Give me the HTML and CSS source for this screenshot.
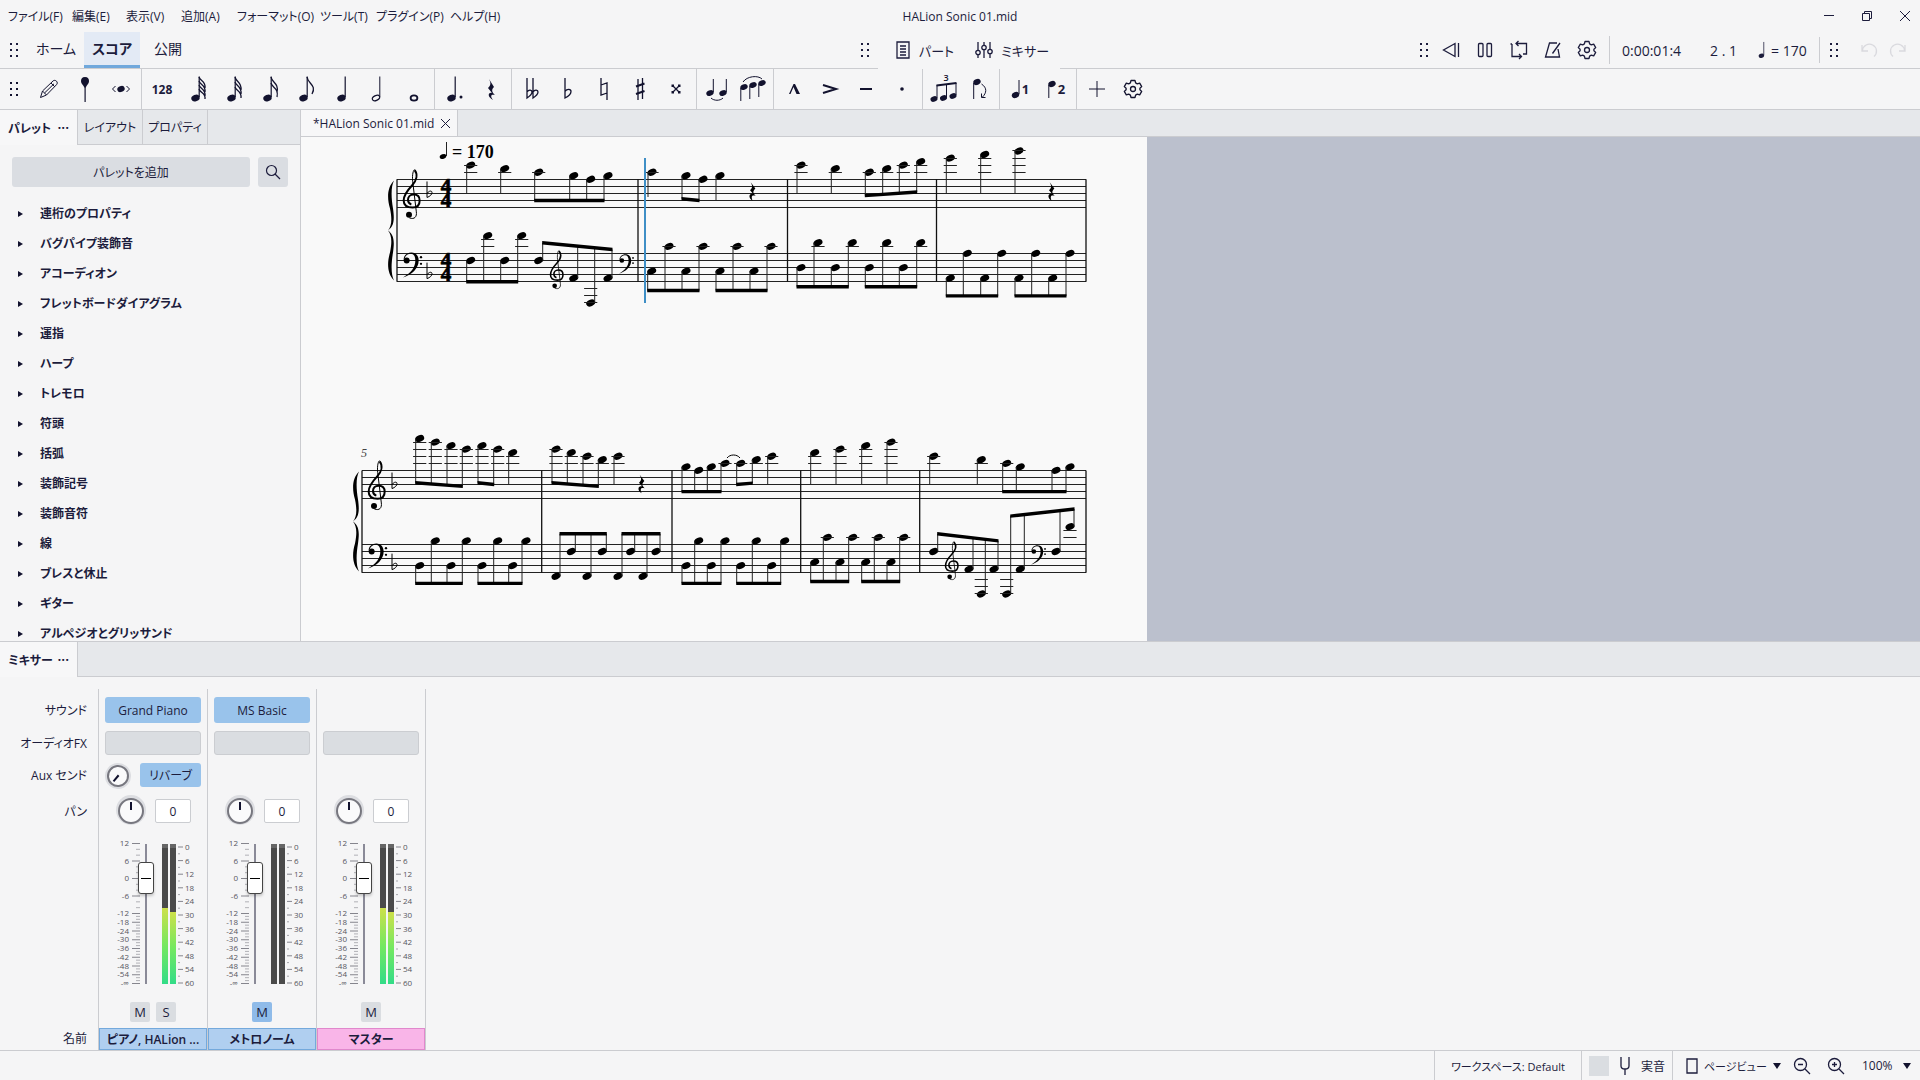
FILE: index.html
```html
<!DOCTYPE html>
<html lang="ja">
<head>
    <meta charset="UTF-8">
    <meta name="viewport" content="width=device-width, initial-scale=1.0">
    <title>HALion Sonic 01.mid</title>
    <link rel="stylesheet" href="styles.css">
</head>
<body>

    <!-- Shared icons -->
    <svg class="defs" width="0" height="0">
        <symbol id="grip" viewBox="0 0 10 16">
            <g fill="currentColor"><rect x="1" y="1" width="2" height="2"/><rect x="7" y="1" width="2" height="2"/><rect x="1" y="7" width="2" height="2"/><rect x="7" y="7" width="2" height="2"/><rect x="1" y="13" width="2" height="2"/><rect x="7" y="13" width="2" height="2"/></g>
        </symbol>
        <symbol id="gear" viewBox="0 0 20 20">
            <path d="M8 1.5h4l.6 2.4 1.7 1 2.4-.7 2 3.4-1.8 1.7v1.4l1.8 1.7-2 3.4-2.4-.7-1.7 1-.6 2.4H8l-.6-2.4-1.7-1-2.4.7-2-3.4 1.8-1.7V9.3L1.3 7.6l2-3.4 2.4.7 1.7-1z" fill="none" stroke="currentColor" stroke-width="1.3" stroke-linejoin="round"/>
            <circle cx="10" cy="10" r="2.5" fill="none" stroke="currentColor" stroke-width="1.3"/>
        </symbol>
        <symbol id="quarter" viewBox="0 0 24 28">
            <ellipse cx="9.5" cy="23" rx="4.3" ry="3.3" transform="rotate(-22 9.5 23)" fill="currentColor"/>
            <path d="M13.2 22V1.5" stroke="currentColor" stroke-width="1.2"/>
        </symbol>
    </svg>

    <header class="titlebar">
        <nav class="menu">
            <a href="#">ファイル(F)</a>
            <a href="#">編集(E)</a>
            <a href="#">表示(V)</a>
            <a href="#">追加(A)</a>
            <a href="#">フォーマット(O)</a>
            <a href="#">ツール(T)</a>
            <a href="#">プラグイン(P)</a>
            <a href="#">ヘルプ(H)</a>
        </nav>
        <div class="title">HALion Sonic 01.mid</div>
        <div class="window-buttons">
            <button aria-label="最小化"><svg width="12" height="12"><path d="M1 5.5h10"/></svg></button>
            <button aria-label="元に戻す"><svg width="12" height="12"><path d="M1.500 3.500h7v7h-7zM3.500 3.500v-2h7v7h-2"/></svg></button>
            <button aria-label="閉じる"><svg width="12" height="12"><path d="M1 1l10 10M11 1L1 11"/></svg></button>
        </div>
    </header>

    <div class="main-toolbar">
        <div class="tabs-area">
            <svg class="grip" width="10" height="16"><use href="#grip"/></svg>
            <a class="page-tab" href="#">ホーム</a>
            <a class="page-tab active" href="#">スコア</a>
            <a class="page-tab" href="#">公開</a>
        </div>
        <div class="view-area">
            <svg class="grip" width="10" height="16"><use href="#grip"/></svg>
            <button class="text-button parts">
                <svg width="14" height="18"><path d="M1 1h12v16H1zM4 5h6M4 8h6M4 11h6M4 14h6"/></svg>パート
            </button>
            <button class="text-button">
                <svg width="18" height="18"><path d="M3 1v8M3 14v3M9 1v3M9 9v8M15 1v7M15 13v4"/><circle cx="3" cy="11.500" r="2.200"/><circle cx="9" cy="6.500" r="2.200"/><circle cx="15" cy="10.500" r="2.200"/></svg>ミキサー
            </button>
        </div>
        <div class="play-area">
            <svg class="grip" width="10" height="16"><use href="#grip"/></svg>
            <div class="play-buttons">
                <button aria-label="巻き戻し"><svg width="20" height="20"><path d="M14 3.500v13L2.500 10zM17.500 3v14"/></svg></button>
                <button aria-label="一時停止"><svg width="20" height="20"><rect x="3.500" y="3.500" width="4.500" height="13" rx="1"/><rect x="12" y="3.500" width="4.500" height="13" rx="1"/></svg></button>
                <button aria-label="ループ"><svg width="20" height="20"><path d="M7 3.500h10.500V14H14M9.500 1L7 3.500 9.500 6M3 4v12.500h9.500M10 14l2.500 2.500L10 19M1.500 4H3"/></svg></button>
                <button aria-label="メトロノーム"><svg width="20" height="20"><path d="M14 3H6.500L2.500 17h14L15 9M9.500 13.500L17 3"/></svg></button>
                <button aria-label="再生設定"><svg width="20" height="20"><use href="#gear"/></svg></button>
            </div>
            <div class="position">
                <span class="time">0:00:01:4</span>
                <span class="beat">2 . 1</span>
                <span class="tempo"><svg width="14" height="18" viewBox="2 0 20 28"><use href="#quarter" width="24" height="28"/></svg>= 170</span>
            </div>
        </div>
        <div class="undo-area">
            <svg class="grip" width="10" height="16"><use href="#grip"/></svg>
            <button disabled aria-label="元に戻す"><svg width="20" height="20"><path d="M3 5v6h6M3.500 10.500a7 7 0 1 1 11.500 6"/></svg></button>
            <button disabled aria-label="やり直す"><svg width="20" height="20"><path d="M17 5v6h-6M16.500 10.500a7 7 0 1 0-11.500 6"/></svg></button>
        </div>
    </div>

    <div class="note-toolbar">
        <div class="group first">
            <svg class="grip" width="10" height="16"><use href="#grip"/></svg>
            <button aria-label="音符入力"><svg class="line" width="20" height="20"><path d="M1.500 18.500l2-6.500L14 2c1-1 2.500-.8 3.500.2s1 2.500 0 3.500L7.500 16zM12 4l3.800 3.800M3.500 12l4 4M5.500 14L15 4.800"/></svg></button>
            <button aria-label="調律"><svg width="12" height="26"><path d="M6 1c3 0 4 2 4 4 0 3-2.500 4-3.300 7v14H5.500V12C4.500 9 2 8 2 5c0-2 1-4 4-4z"/></svg></button>
            <button aria-label="ステップ入力"><svg width="20" height="14"><ellipse cx="10" cy="7" rx="3.800" ry="2.900" transform="rotate(-20 10 7)"/><path class="line" d="M4.500 4L1.500 7l3 3M15.500 4l3 3-3 3"/></svg></button>
        </div>
        <div class="group">
            <button class="bold">128</button>
            <button aria-label="64分音符"><svg width="24" height="28"><use href="#quarter"/><path class="flag" d="M13 2c1 4 7 4 6 11M13 6c1 4 7 4 6 11M13 10c1 4 7 4 6 11M13 14c1 4 7 4 6 10"/></svg></button>
            <button aria-label="32分音符"><svg width="24" height="28"><use href="#quarter"/><path class="flag" d="M13 2c1 5 7 5 6 13M13 7c1 4 7 4 6 12M13 12c1 4 7 4 6 11"/></svg></button>
            <button aria-label="16分音符"><svg width="24" height="28"><use href="#quarter"/><path class="flag" d="M13 2c1 6 8 6 6 15M13 8c1 5 8 5 6 14"/></svg></button>
            <button aria-label="8分音符"><svg width="24" height="28"><use href="#quarter"/><path class="flag" d="M13 2c1 7 10 8 5 17"/></svg></button>
            <button aria-label="4分音符"><svg width="24" height="28"><use href="#quarter" x="2"/></svg></button>
            <button aria-label="2分音符"><svg width="24" height="28"><ellipse class="hollow" cx="10" cy="23" rx="3.900" ry="2.400" transform="rotate(-28 10 23)"/><path class="line" d="M13.800 22V1.500"/></svg></button>
            <button aria-label="全音符"><svg width="24" height="28"><ellipse class="hollow whole" cx="12" cy="23" rx="3.400" ry="2.600"/></svg></button>
        </div>
        <div class="group">
            <button aria-label="付点"><svg width="24" height="28"><use href="#quarter" x="-1"/><circle cx="18" cy="22" r="1.500"/></svg></button>
            <button aria-label="休符"><svg width="24" height="28"><path d="M10 4l5 8c-3 3-2 5 1 8-4-1-5 1-2 5-6-3-5-8-1-7l-4-5c3-3 3-5 1-9z"/></svg></button>
        </div>
        <div class="group">
            <button aria-label="ダブルフラット"><svg class="acc" width="24" height="28"><path d="M7 3v20c3-2 5-4 5-6s-3-3-5 0M13 3v20c3-2 5-4 5-6s-3-3-5 0"/></svg></button>
            <button aria-label="フラット"><svg class="acc" width="24" height="28"><path d="M9 3v20c4-2 6-4 6-6.500s-4-3-6 0"/></svg></button>
            <button aria-label="ナチュラル"><svg class="acc" width="24" height="28"><path d="M9 3v17l6-2M15 25V8l-6 2"/></svg></button>
            <button aria-label="シャープ"><svg class="acc" width="24" height="28"><path d="M10 4v21M14.500 3v21"/><path class="thick" d="M8 11.500l8.500-3M8 19l8.500-3"/></svg></button>
            <button aria-label="ダブルシャープ"><svg width="24" height="28"><path class="acc" d="M8.500 10.500l7 7M15.500 10.500l-7 7"/><path d="M7.500 9.500h2.500v2.500H7.500zM14 9.500h2.500v2.500H14zM7.500 16h2.500v2.500H7.500zM14 16h2.500v2.500H14z"/></svg></button>
        </div>
        <div class="group">
            <button aria-label="タイ"><svg width="26" height="28"><ellipse cx="6" cy="18" rx="3.800" ry="2.800" transform="rotate(-22 6 18)"/><ellipse cx="19" cy="18" rx="3.800" ry="2.800" transform="rotate(-22 19 18)"/><path class="line" d="M9.300 17V4M22.300 17V4M7 23c3 3 9 3 12 0"/></svg></button>
            <button aria-label="スラー"><svg width="28" height="28"><ellipse cx="5" cy="12" rx="3.800" ry="2.800" transform="rotate(-22 5 12)"/><ellipse cx="14" cy="10" rx="3.800" ry="2.800" transform="rotate(-22 14 10)"/><ellipse cx="23" cy="8" rx="3.800" ry="2.800" transform="rotate(-22 23 8)"/><path class="line" d="M1.800 13v13M10.800 11v13M19.800 9v13M4 7c4-6 15-7 19-3"/></svg></button>
        </div>
        <div class="group">
            <button aria-label="マルカート"><svg width="24" height="28"><path d="M7 19l4.500-10H13l5 10h-3.500L11.500 12 8.500 19z"/></svg></button>
            <button aria-label="アクセント"><svg width="24" height="28"><path class="thick" d="M5 10l13 4-13 4"/></svg></button>
            <button aria-label="テヌート"><svg width="24" height="28"><path class="thick" d="M6 14h12"/></svg></button>
            <button aria-label="スタッカート"><svg width="24" height="28"><circle cx="12" cy="14" r="1.800"/></svg></button>
        </div>
        <div class="group">
            <button aria-label="連符"><svg width="28" height="30"><ellipse cx="5" cy="25" rx="3.600" ry="2.700" transform="rotate(-20 5 25)"/><ellipse cx="14.500" cy="24" rx="3.600" ry="2.700" transform="rotate(-20 14.500 24)"/><ellipse cx="24" cy="22" rx="3.600" ry="2.700" transform="rotate(-20 24 22)"/><path class="line" d="M8 24V11M17.500 23V10M27 21V9"/><path class="thick" d="M7.500 11.500l20-2.500"/><text x="17" y="7" class="tuplet">3</text></svg></button>
            <button aria-label="反転"><svg width="24" height="28"><ellipse cx="10" cy="7" rx="3.800" ry="2.900" transform="rotate(-22 10 7)"/><path class="line" d="M6.700 8v16M14.500 9c6 4 5 9 1 13M14.500 18.500V22.500h4"/></svg></button>
        </div>
        <div class="group">
            <button class="bold voice"><svg width="10" height="20" viewBox="0 0 10 20"><ellipse cx="4.500" cy="16" rx="3.800" ry="2.900" transform="rotate(-22 4.500 16)"/><path class="line" d="M8 15V1"/></svg>1</button>
            <button class="bold voice"><svg width="10" height="20" viewBox="0 0 10 20"><ellipse cx="5" cy="5" rx="3.800" ry="2.900" transform="rotate(-22 5 5)"/><path class="line" d="M1.800 6v13"/></svg>2</button>
        </div>
        <div class="group last">
            <button aria-label="追加"><svg class="line" width="18" height="18"><path d="M9 1v16M1 9h16"/></svg></button>
            <button aria-label="カスタマイズ"><svg width="20" height="20"><use href="#gear"/></svg></button>
        </div>
    </div>

    <div class="workspace">
        <aside class="sidebar">
            <div class="panel-tabs">
                <button class="active">パレット <span class="dots">···</span></button>
                <button>レイアウト</button>
                <button>プロパティ</button>
            </div>
            <div class="palette-search">
                <button class="add">パレットを追加</button>
                <button class="find" aria-label="検索"><svg width="16" height="16"><circle cx="6.500" cy="6.500" r="5"/><path d="M10 10l5 5"/></svg></button>
            </div>
            <ul class="palettes">
                <li>連桁のプロパティ</li>
                <li>バグパイプ装飾音</li>
                <li>アコーディオン</li>
                <li>フレットボードダイアグラム</li>
                <li>運指</li>
                <li>ハープ</li>
                <li>トレモロ</li>
                <li>符頭</li>
                <li>括弧</li>
                <li>装飾記号</li>
                <li>装飾音符</li>
                <li>線</li>
                <li>ブレスと休止</li>
                <li>ギター</li>
                <li>アルペジオとグリッサンド</li>
            </ul>
        </aside>
        <main class="document">
            <div class="doc-tabs">
                <div class="doc-tab">*HALion Sonic 01.mid <button aria-label="閉じる"><svg width="11" height="11"><path d="M1 1l9 9M10 1l-9 9"/></svg></button></div>
            </div>
            <div class="canvas">
                <div class="sheet"><svg id="score" width="846" height="504" viewBox="301 137 846 504"></svg></div>
            </div>
        </main>
    </div>

    <section class="mixer">
        <div class="panel-tabs">
            <button class="active">ミキサー <span class="dots">···</span></button>
        </div>
        <div class="strips">
            <div class="strip labels">
                <div class="sound">サウンド</div>
                <div class="fx">オーディオFX</div>
                <div class="aux">Aux センド</div>
                <div class="pan">パン</div>
                <div class="fader"></div>
                <div class="mute"></div>
                <div class="name">名前</div>
            </div>
            <div class="strip">
                <div class="sound"><button class="slot blue">Grand Piano</button></div>
                <div class="fx"><button class="slot empty" aria-label="FX"></button></div>
                <div class="aux"><input type="range" class="knob small" aria-label="センド量"><button class="slot blue">リバーブ</button></div>
                <div class="pan"><input type="range" class="knob" aria-label="パン"><input type="text" value="0" aria-label="パンの値"></div>
                <div class="fader" data-left="76" data-right="72"></div>
                <div class="mute"><button>M</button><button>S</button></div>
                <div class="name blue-name">ピアノ, HALion ...</div>
            </div>
            <div class="strip">
                <div class="sound"><button class="slot blue">MS Basic</button></div>
                <div class="fx"><button class="slot empty" aria-label="FX"></button></div>
                <div class="aux"></div>
                <div class="pan"><input type="range" class="knob" aria-label="パン"><input type="text" value="0" aria-label="パンの値"></div>
                <div class="fader" data-left="0" data-right="0"></div>
                <div class="mute"><button class="on">M</button></div>
                <div class="name blue-name">メトロノーム</div>
            </div>
            <div class="strip">
                <div class="sound"></div>
                <div class="fx"><button class="slot empty" aria-label="FX"></button></div>
                <div class="aux"></div>
                <div class="pan"><input type="range" class="knob" aria-label="パン"><input type="text" value="0" aria-label="パンの値"></div>
                <div class="fader" data-left="76" data-right="72"></div>
                <div class="mute"><button>M</button></div>
                <div class="name pink-name">マスター</div>
            </div>
        </div>
    </section>

    <footer class="statusbar">
        <button class="workspace-name">ワークスペース: Default</button>
        <button class="concert"><span class="box"></span><svg width="12" height="20"><path d="M2 1v9c0 4 8 4 8 0V1M6 13v6"/></svg>実音</button>
        <div class="view">
            <button class="page-view"><svg width="12" height="16"><path d="M1 1h10v14H1z"/></svg>ページビュー<i class="down"></i></button>
            <button class="zoom" aria-label="縮小"><svg width="18" height="18"><circle cx="7.500" cy="7.500" r="6"/><path d="M12 12l5 5M5 7.500h5"/></svg></button>
            <button class="zoom" aria-label="拡大"><svg width="18" height="18"><circle cx="7.500" cy="7.500" r="6"/><path d="M12 12l5 5M5 7.500h5M7.500 5v5"/></svg></button>
            <button class="percent">100%<i class="down"></i></button>
        </div>
    </footer>

    <script src="score.js"></script>
</body>
</html>
```

FILE: styles.css
```css
* {
    box-sizing: border-box;
}

body {
    margin: 0;
    height: 100vh;
    display: flex;
    flex-direction: column;
    overflow: hidden;
    background-color: #f5f5f6;
    color: #1c1c3c;
    font-family: "Open Sans", "Noto Sans CJK JP", sans-serif;
    font-size: 12px;
    font-feature-settings: "palt";
}

button, input {
    font: inherit;
    font-feature-settings: inherit;
    color: inherit;
    margin: 0;
    padding: 0;
    border: 0;
    background: none;
}

button {
    display: flex;
    align-items: center;
    justify-content: center;
    white-space: nowrap;
}

a {
    color: inherit;
    text-decoration: none;
}

svg {
    flex: none;
    display: block;
}

.defs {
    position: absolute;
}

/* Title bar */
.titlebar {
    display: grid;
    grid-template-columns: 1fr auto 1fr;
    align-items: center;
    height: 32px;
}

.menu {
    display: grid;
    grid-template-columns: 64px 54px 55px 56px 83px 56px 74px auto;
    padding-left: 8px;
    white-space: nowrap;
}

.window-buttons {
    display: flex;
    justify-content: flex-end;
    gap: 26px;
    padding-right: 9px;
}

.window-buttons path, .doc-tab path {
    fill: none;
    stroke: #1c1c3c;
}

/* Tabs, parts, playback, undo */
.main-toolbar {
    display: flex;
    height: 37px;
    border-bottom: 1px solid #cbccd0;
    font-size: 14px;
}

.main-toolbar > div {
    display: flex;
    align-items: center;
    height: 36px;
}

.tabs-area {
    padding-left: 9px;
    flex: 1 1 74px;
}

.page-tab {
    width: 56px;
    height: 36px;
    line-height: 34px;
    text-align: center;
    white-space: nowrap;
}

.grip + .page-tab {
    margin-left: 9px;
}

.page-tab.active {
    background-color: #e3eaf5;
    border-bottom: 3px solid #70a8dc;
    font-weight: 600;
}

.main-toolbar .view-area {
    position: relative;
    width: 182px;
    padding-left: 4px;
    flex: none;
    font-size: 13px;
}

/* the floating bar hides the toolbar line below it */
.view-area::after {
    content: "";
    position: absolute;
    left: 22px;
    bottom: -1px;
    width: 182px;
    height: 1px;
    background-color: #f5f5f6;
}

.main-toolbar svg path, .main-toolbar svg circle, .main-toolbar svg rect {
    stroke: #1c1c3c;
    stroke-width: 1.3;
    fill: none;
}

.main-toolbar svg.grip {
    color: #1c1c3c;
}

.text-button {
    gap: 9px;
    margin-left: 26px;
}

.text-button + .text-button {
    gap: 8px;
    margin-left: 21px;
}

.play-area {
    flex: 1 1 0;
    justify-content: flex-end;
}

.play-buttons {
    display: flex;
    gap: 14px;
    padding: 4px 12px;
    border-right: 1px solid #cbccd0;
    margin-right: 12px;
}

.position {
    display: flex;
    width: 198px;
    height: 26px;
    align-items: center;
    border-right: 1px solid #cbccd0;
    white-space: nowrap;
}

.time {
    width: 88px;
}

.beat {
    width: 46px;
}

.tempo {
    display: flex;
    align-items: center;
    gap: 1px;
}

.main-toolbar .undo-area {
    position: relative;
    width: 100px;
    padding-left: 9px;
}

.undo-area button {
    margin-left: 9px;
    opacity: 0.12;
}

.undo-area .grip + button {
    margin-left: 20px;
}

/* Note input */
.note-toolbar {
    display: flex;
    align-items: center;
    height: 41px;
    border-bottom: 1px solid #cbccd0;
}

.group {
    display: flex;
    align-items: center;
    height: 40px;
    padding: 0 2px;
    border-right: 1px solid #cbccd0;
}

.group.first {
    padding-left: 9px;
}

.group.first .grip {
    margin-right: 12px;
}

.group.last {
    border-right: 0;
}

.group button {
    width: 36px;
    height: 36px;
}

.group svg {
    overflow: visible;
    color: #12122e;
    fill: #12122e;
}

.group .line, .group svg.line {
    fill: none;
    stroke: #12122e;
    stroke-width: 1;
}

.group .flag {
    fill: none;
    stroke: #12122e;
    stroke-width: 1.3;
}

.group .hollow {
    fill: none;
    stroke: #12122e;
    stroke-width: 1.2;
}

.group .whole {
    stroke-width: 1.8;
}

.group .acc {
    fill: none;
    stroke: #12122e;
    stroke-width: 1.3;
}

.group .thick {
    fill: none;
    stroke: #12122e;
    stroke-width: 2;
}

.group .bold {
    font-weight: 700;
}

.group .voice {
    gap: 1px;
    font-size: 13px;
}

.group .tuplet {
    font-size: 9px;
    font-weight: 600;
    text-anchor: middle;
}

/* Workspace */
.workspace {
    display: flex;
    flex: 1;
    min-height: 0;
}

.sidebar {
    width: 301px;
    border-right: 1px solid #cbccd0;
    overflow: hidden;
}

.panel-tabs {
    display: flex;
    height: 35px;
    background-color: #e6e8eb;
    border-bottom: 1px solid #cbccd0;
}

.panel-tabs button {
    width: 65px;
    height: 34px;
    border-right: 1px solid #cbccd0;
}

.panel-tabs button.active {
    width: 78px;
    height: 35px;
    justify-content: space-between;
    padding: 0 8px;
    background-color: #f7f7f8;
    font-weight: 600;
}

.dots {
    font-size: 14px;
}

.palette-search {
    display: flex;
    gap: 8px;
    padding: 12px;
}

.palette-search button {
    height: 30px;
    border-radius: 3px;
    background-color: #dadde2;
}

.palette-search .add {
    flex: 1;
}

.palette-search .find {
    width: 30px;
}

.find svg {
    fill: none;
    stroke: #1c1c3c;
    stroke-width: 1.2;
}

.palettes {
    list-style: none;
    margin: 0;
    padding: 0;
}

.palettes li {
    display: flex;
    align-items: center;
    height: 30px;
    line-height: 14px;
    padding-left: 18px;
    font-weight: 600;
}

.palettes li::before {
    content: "";
    border-left: 5px solid #12122e;
    border-top: 3px solid transparent;
    border-bottom: 3px solid transparent;
    margin-right: 17px;
}

.document {
    flex: 1;
    min-width: 0;
    display: flex;
    flex-direction: column;
}

.doc-tabs {
    display: flex;
    height: 27px;
    background-color: #e6e8eb;
    border-bottom: 1px solid #cbccd0;
}

.doc-tab {
    display: flex;
    align-items: center;
    gap: 6px;
    height: 27px;
    padding: 0 6px 0 12px;
    background-color: #f7f7f8;
    border-right: 1px solid #cbccd0;
    border-bottom: 1px solid #cbccd0;
}

.canvas {
    flex: 1;
    min-height: 0;
    overflow: hidden;
    background-color: #bbc0cd;
}

.sheet {
    width: 846px;
    background-color: #f9f9f9;
}

/* Score drawing */
#score {
    stroke: none;
    fill: #000;
}

#score .staff {
    stroke: #222;
    stroke-width: 1;
}

#score .stem {
    stroke: #222;
    stroke-width: 1;
}

#score .bar {
    stroke: #111;
    stroke-width: 1.3;
}

#score .stroke {
    fill: none;
    stroke: #000;
}

#score .cursor {
    fill: #3f8fc6;
}

#score .time-sig {
    font: bold 21px "Liberation Serif", serif;
    text-anchor: middle;
    stroke: #000;
    stroke-width: 0.7;
}

#score .tempo-text {
    font: bold 18px "Liberation Serif", serif;
}

#score .measure-number {
    font: italic 12px "Liberation Serif", serif;
    fill: #444;
}

/* Mixer */
.mixer {
    border-top: 1px solid #cbccd0;
}

.strips {
    display: flex;
    padding-top: 12px;
}

.strip {
    display: grid;
    grid-template-rows: 34px 32px 35px 38px 166px 26px 22px;
    width: 109px;
    padding-top: 8px;
    border-right: 1px solid #cbccd0;
}

.labels {
    width: 99px;
    text-align: right;
}

.labels > div {
    padding-right: 11px;
    line-height: 27px;
}

.labels .aux, .labels .fx {
    line-height: 25px;
}

.labels .name {
    line-height: 22px;
}

.strip .slot {
    width: 96px;
    height: 26px;
    border-radius: 3px;
    margin: 0 6px;
}

.strip .blue {
    background-color: #99c3eb;
}

.strip .empty {
    height: 24px;
    background-color: #dadde1;
    border: 1px solid #cbcdd1;
}

.strip:not(.labels) .aux {
    display: flex;
    padding: 0 6px;
    justify-content: space-between;
}

.strip .aux .slot {
    width: 61px;
    height: 24px;
    margin: 0;
}

.strip:not(.labels) .pan {
    display: flex;
    align-items: center;
    justify-content: center;
    height: 26px;
    gap: 11px;
    padding-left: 3px;
}

.pan input[type="text"] {
    width: 36px;
    height: 24px;
    background-color: #fff;
    border: 1px solid #cbcdd1;
    border-radius: 2px;
    text-align: center;
}

/* Rotary knobs */
.knob {
    appearance: none;
    width: 26px;
    height: 26px;
    border: 2px solid #77777f;
    border-radius: 50%;
    background: linear-gradient(#12122e, #12122e) 50% 2px / 2px 8px no-repeat #fafafb;
    box-shadow: 0 -1px 0 2px #dcdde1;
}

.knob.small {
    width: 22px;
    height: 22px;
    margin: 2px;
    transform: rotate(-140deg);
    box-shadow: 0 0 0 2px #dcdde1;
}

.knob::-webkit-slider-thumb {
    appearance: none;
    width: 1px;
    height: 1px;
    opacity: 0;
}

/* Fader with its two scales */
.strip:not(.labels) .fader {
    display: flex;
    padding: 8px 0 0 17px;
}

.fader svg {
    overflow: visible;
    font-size: 8px;
    fill: #55555f;
}

.fader svg line {
    stroke: #85858d;
}

.fader svg .left-label {
    text-anchor: end;
}

.fader input {
    appearance: none;
    writing-mode: vertical-lr;
    direction: rtl;
    position: relative;
    width: 16px;
    height: 140px;
    margin: 0 8px 0 -2px;
    background: linear-gradient(#8a8a98, #8a8a98) 50% 0 / 2px 100% no-repeat;
}

.fader input::-webkit-slider-thumb {
    appearance: none;
    width: 16px;
    height: 32px;
    border: 1px solid #444;
    border-radius: 3px;
    background: linear-gradient(#000, #000) 50% 50% / 10px 1px no-repeat #fff;
    box-shadow: 0 2px 3px rgba(0, 0, 0, 0.2);
}

.meter {
    display: flex;
    align-items: flex-end;
    width: 6px;
    height: 140px;
    margin-right: 2px;
    background-color: #4a4a4a;
    border-top: 4px solid #666;
}

.meter div {
    width: 6px;
    background: linear-gradient(#cde04a, #74e860 50%, #32dc88);
}

.mute {
    display: flex;
    justify-content: center;
    gap: 6px;
}

.mute button {
    width: 20px;
    height: 20px;
    border-radius: 2px;
    background-color: #dadde1;
    font-size: 13px;
}

.mute button.on {
    background-color: #8fbbe9;
}

.strip:not(.labels) .name {
    line-height: 21px;
    text-align: center;
    font-weight: 600;
    border: 1px solid #74a9dc;
    white-space: nowrap;
    overflow: hidden;
}

.blue-name {
    background-color: #b0cff0;
}

.strip .pink-name.name {
    background-color: #f9b5e8;
    border-color: #e088cc;
}

/* Status bar */
.statusbar {
    display: flex;
    justify-content: flex-end;
    height: 30px;
    border-top: 1px solid #cbccd0;
}

.statusbar svg {
    fill: none;
    stroke: #1c1c3c;
    stroke-width: 1.3;
}

.statusbar .workspace-name, .statusbar .page-view {
    font-size: 11px;
}

.workspace-name {
    width: 147px;
    border-left: 1px solid #cbccd0;
}

.concert {
    width: 91px;
    gap: 10px;
    border-left: 1px solid #cbccd0;
}

.box {
    width: 20px;
    height: 20px;
    background-color: #dadde1;
}

.view {
    display: flex;
    width: 248px;
    padding-left: 13px;
    border-left: 1px solid #cbccd0;
}

.page-view {
    width: 90px;
    gap: 6px;
    justify-content: flex-start;
}

.down {
    border-top: 6px solid #12122e;
    border-left: 4px solid transparent;
    border-right: 4px solid transparent;
}

.zoom {
    width: 18px;
    margin-left: 17px;
}

.zoom + .zoom {
    margin-left: 16px;
}

.percent {
    margin-left: 17px;
    gap: 10px;
}
```

FILE: score.js
```js
const score = document.getElementById('score');
const HALF = 3.54; // half a staff space
let out = '';

function line(cls, x1, y1, x2, y2) {
    out += `<line class="${cls}" x1="${x1}" y1="${y1}" x2="${x2}" y2="${y2}"/>`;
}

// One stem group: notes are [x, step], step 0 is the top staff line
function group(top, dir, notes, from, to) {
    const side = dir === 'up' ? 4 : -4;
    const x1 = notes[0][0] + side;
    const x2 = notes[notes.length - 1][0] + side;
    const y1 = top + from * HALF;
    const y2 = top + (to === undefined ? from : to) * HALF;
    notes.forEach(([x, step]) => {
        const y = top + step * HALF;
        const sx = x + side;
        const end = x2 === x1 ? y1 : y1 + (y2 - y1) * (sx - x1) / (x2 - x1);
        out += `<ellipse cx="${x}" cy="${y}" rx="4.7" ry="3.2" transform="rotate(-24 ${x} ${y})"/>`;
        line('stem', sx, y, sx, end);
        for (let s = -2; s >= step; s -= 2) ledger(x, top + s * HALF);
        for (let s = 10; s <= step; s += 2) ledger(x, top + s * HALF);
    });
    if (notes.length > 1) {
        out += `<polygon points="${x1 - 0.5},${y1 - 1.7} ${x2 + 0.5},${y2 - 1.7} ${x2 + 0.5},${y2 + 1.7} ${x1 - 0.5},${y1 + 1.7}"/>`;
    }
}

function ledger(x, y) {
    const ly = Math.round(y - 0.5) + 0.5;
    line('staff', x - 6.6, ly, x + 6.6, ly);
}

function trebleClef(x, y, k) {
    out += `<g transform="translate(${x} ${y}) scale(${k})"><path class="stroke" stroke-width="3" d="M-8 52C8 58 15 48 13 34L2-58C0-78 4-92 8-93"/>
        <path class="stroke" stroke-width="6" d="M8-91C18-78 14-60 0-45C-16-28-25-14-25 0C-25 16-12 21 2 21C16 21 23 12 23 0C23-12 15-18 5-18C-6-18-12-10-12-2C-12 6-8 10-2 12"/>
        <circle cx="-9" cy="43" r="9"/></g>`;
}

function bassClef(x, y, k) {
    out += `<g transform="translate(${x} ${y}) scale(${k})"><circle cx="-16" cy="0" r="9"/>
        <path d="M-25-2C-26-15-14-24-2-24C12-24 20-13 20 0C20 24 0 42-27 51C-2 36 10 20 10 0C10-13 5-20-4-20C-12-20-20-15-22-6Z"/>
        <circle cx="27" cy="-10" r="3.5"/><circle cx="27" cy="10" r="3.5"/></g>`;
}

function flat(x, y) {
    out += `<path class="stroke" d="M${x - 2} ${y - 12}V${y + 4}C${x + 1} ${y + 3} ${x + 3} ${y + 1} ${x + 3} ${y - 1}C${x + 3} ${y - 3} ${x} ${y - 3} ${x - 2} ${y}"/>`;
}

function rest(x, y) {
    out += `<path transform="translate(${x} ${y}) scale(.3333)" d="M-6-28L8-9C0 0 0 4 9 13C-2 9-6 14 0 28C-14 20-12 4 1 7L-8-4C0-12 0-16-6-28Z"/>`;
}

function system(left, right, top, bass, bars) {
    for (let i = 0; i < 5; i++) {
        [top, bass].forEach(t => {
            const y = Math.round(t + i * HALF * 2 - 0.5) + 0.5;
            line('staff', left, y, right, y);
        });
    }
    [left, ...bars, right].forEach(x => line('bar', x, top, x, bass + 8 * HALF));
    const mid = (top + bass + 8 * HALF) / 2;
    out += `<path transform="translate(${left - 9} ${mid})" d="M6-50C-1-43-1-32 2-22C4-12 4-5 0 0C4 5 4 12 2 22C-1 32-1 43 6 50C3 44 3 34 5 22C7 8 5 4 0 0C5-4 7-8 5-22C3-34 3-44 6-50Z"/>`;
    trebleClef(left + 15, top + 6 * HALF, 0.3333);
    bassClef(left + 15, bass + 2 * HALF, 0.3333);
    flat(left + 32, top + 4 * HALF);
    flat(left + 32, bass + 6 * HALF);
}

// Alternating pattern of eighth notes under one beam
function pairs(top, dir, xs, a, b, end) {
    group(top, dir, xs.map((x, i) => [x, i % 2 ? b : a]), end);
}

// First system
const t1 = 179.3, b1 = 253.4;
system(397, 1086, t1, b1, [638, 787.5, 936.5]);
out += `<text class="time-sig" x="446" y="193">4</text><text class="time-sig" x="446" y="207">4</text>
        <text class="time-sig" x="446" y="267">4</text><text class="time-sig" x="446" y="281">4</text>
        <ellipse cx="443" cy="156.5" rx="3.4" ry="2.3" transform="rotate(-22 443 156.5)"/>
        <text class="tempo-text" x="452" y="158">= 170</text>`;
line('stem', 446.5, 156, 446.5, 142);

group(t1, 'down', [[470.7, -4]], 4);
group(t1, 'down', [[504.7, -3]], 4);
group(t1, 'down', [[538.7, -2], [573.7, -1], [590.7, 0], [608, -1]], 6);
group(t1, 'down', [[652, -2]], 5);
group(t1, 'down', [[686, -1], [703, 0]], 5.5, 6);
group(t1, 'down', [[720, -1]], 6);
rest(752.7, 191.5);
group(t1, 'down', [[801, -4]], 4);
group(t1, 'down', [[835.3, -3]], 4);
group(t1, 'down', [[869.3, -2], [886.7, -3], [903.3, -4], [920.7, -5]], 4.6, 3.6);
group(t1, 'down', [[950.3, -6]], 4);
group(t1, 'down', [[984.7, -7]], 4);
group(t1, 'down', [[1019, -8]], 4);
rest(1051.7, 191.5);

pairs(b1, 'down', [470.7, 487.7, 504.7, 521.7], 2, -5, 8);
group(b1, 'up', [[538.7, 2], [573.7, 7], [590.7, 14], [608, 7]], -3, -1.1);
trebleClef(557, b1 + 6 * HALF, 0.26);
bassClef(626, b1 + 2 * HALF, 0.26);
pairs(b1, 'down', [651.7, 669, 686, 703], 5, -2, 10.5);
pairs(b1, 'down', [720, 737, 754, 771], 5, -2, 10.5);
pairs(b1, 'down', [801, 818, 835.3, 852.3], 4, -3, 9.4);
pairs(b1, 'down', [869.3, 886.7, 903.3, 920.7], 4, -3, 9.4);
pairs(b1, 'down', [950.3, 967.3, 984.7, 1001.7], 7, 0, 12);
pairs(b1, 'down', [1019, 1035.7, 1052.7, 1070], 7, 0, 12);

// Playback cursor
out += '<rect class="cursor" x="644" y="158" width="2" height="145"/>';

// Second system
const t2 = 470.4, b2 = 544.4;
system(362, 1086, t2, b2, [541.7, 672, 800.7, 919.7]);
out += '<text class="measure-number" x="361" y="457">5</text>';

group(t2, 'down', [[419.7, -9], [435.3, -8], [451, -7], [466.3, -6]], 3.5, 4.5);
group(t2, 'down', [[482, -7], [497.7, -6]], 3.5, 4);
group(t2, 'down', [[512.7, -5]], 4);
group(t2, 'down', [[556, -6], [571.3, -5], [587, -4], [602.3, -3]], 3.5, 4.5);
group(t2, 'down', [[618, -4]], 4);
rest(641.7, 484);
group(t2, 'down', [[686, -1], [698.7, 0], [711.3, -1], [725, -2]], 6);
group(t2, 'down', [[740.7, -2], [756.3, -3]], 4, 3.6);
group(t2, 'down', [[771.7, -4]], 4);
out += '<path class="stroke" d="M727 458C730 454 737 454 740 458"/>';
group(t2, 'down', [[814.7, -5]], 4);
group(t2, 'down', [[840, -6]], 4);
group(t2, 'down', [[865.7, -7]], 4);
group(t2, 'down', [[891, -8]], 4);
group(t2, 'down', [[933.7, -4]], 4);
group(t2, 'down', [[981.3, -3]], 4);
group(t2, 'down', [[1006.7, -2], [1020.3, -1], [1056, 0], [1070, -1]], 6);

pairs(b2, 'down', [419.7, 435.3, 451, 466.3], 6, -1, 11);
pairs(b2, 'down', [482, 497.7, 512.7, 526], 6, -1, 11);
pairs(b2, 'up', [556, 571.3, 587, 602.3], 9, 2, -3);
pairs(b2, 'up', [618, 630.7, 643, 656], 9, 2, -3);
pairs(b2, 'down', [686, 698.7, 711.3, 725], 6, -1, 11);
pairs(b2, 'down', [740.7, 756.3, 771.7, 784.7], 6, -1, 11);
pairs(b2, 'down', [814.7, 827.3, 840, 852.7], 5, -2, 10.5);
pairs(b2, 'down', [865.7, 878.3, 891, 903.7], 5, -2, 10.5);
group(b2, 'up', [[933.7, 2], [969, 7], [981.3, 14], [994, 7]], -3, -1);
group(b2, 'up', [[1006.7, 14], [1020.3, 7], [1056, 2], [1070, -5]], -8, -10);
trebleClef(952, b2 + 6 * HALF, 0.26);
bassClef(1038, b2 + 2 * HALF, 0.26);

score.innerHTML = out;

// Mixer faders
const gains = ['12', '6', '0', '-6', '-12', '-18', '-24', '-30', '-36', '-42', '-48', '-54', '-∞'];
document.querySelectorAll('.fader[data-left]').forEach(fader => {
    let left = '';
    let right = '';
    const gainY = i => i < 4 ? i * 17.5 - 0.5 : 69.5 + (i - 4) * 8.75;
    gains.forEach((g, i) => {
        const y = gainY(i);
        left += `<text class="left-label" x="13" y="${y + 2.5}">${g}</text><line x1="16" x2="24" y1="${y}" y2="${y}"/>`;
        if (i < gains.length - 1) {
            const step = (gainY(i + 1) - y) / 3;
            left += `<line x1="20" x2="24" y1="${y + step}" y2="${y + step}" opacity=".6"/><line x1="20" x2="24" y1="${y + step * 2}" y2="${y + step * 2}" opacity=".6"/>`;
        }
    });
    for (let i = 0; i <= 10; i++) {
        const y = 3 + i * 13.6;
        right += `<line x1="0" x2="5" y1="${y}" y2="${y}"/><text x="7" y="${y + 3}">${i * 6}</text>`;
        if (i < 10) right += `<line x1="0" x2="2" y1="${y + 6.8}" y2="${y + 6.8}" opacity=".7"/>`;
    }
    fader.innerHTML = `
        <svg width="24" height="140">${left}</svg>
        <input type="range" min="0" max="100" value="83" aria-label="音量">
        <div class="meter"><div style="height: ${fader.dataset.left}px"></div></div>
        <div class="meter"><div style="height: ${fader.dataset.right}px"></div></div>
        <svg width="22" height="140">${right}</svg>
    `;
});
```
